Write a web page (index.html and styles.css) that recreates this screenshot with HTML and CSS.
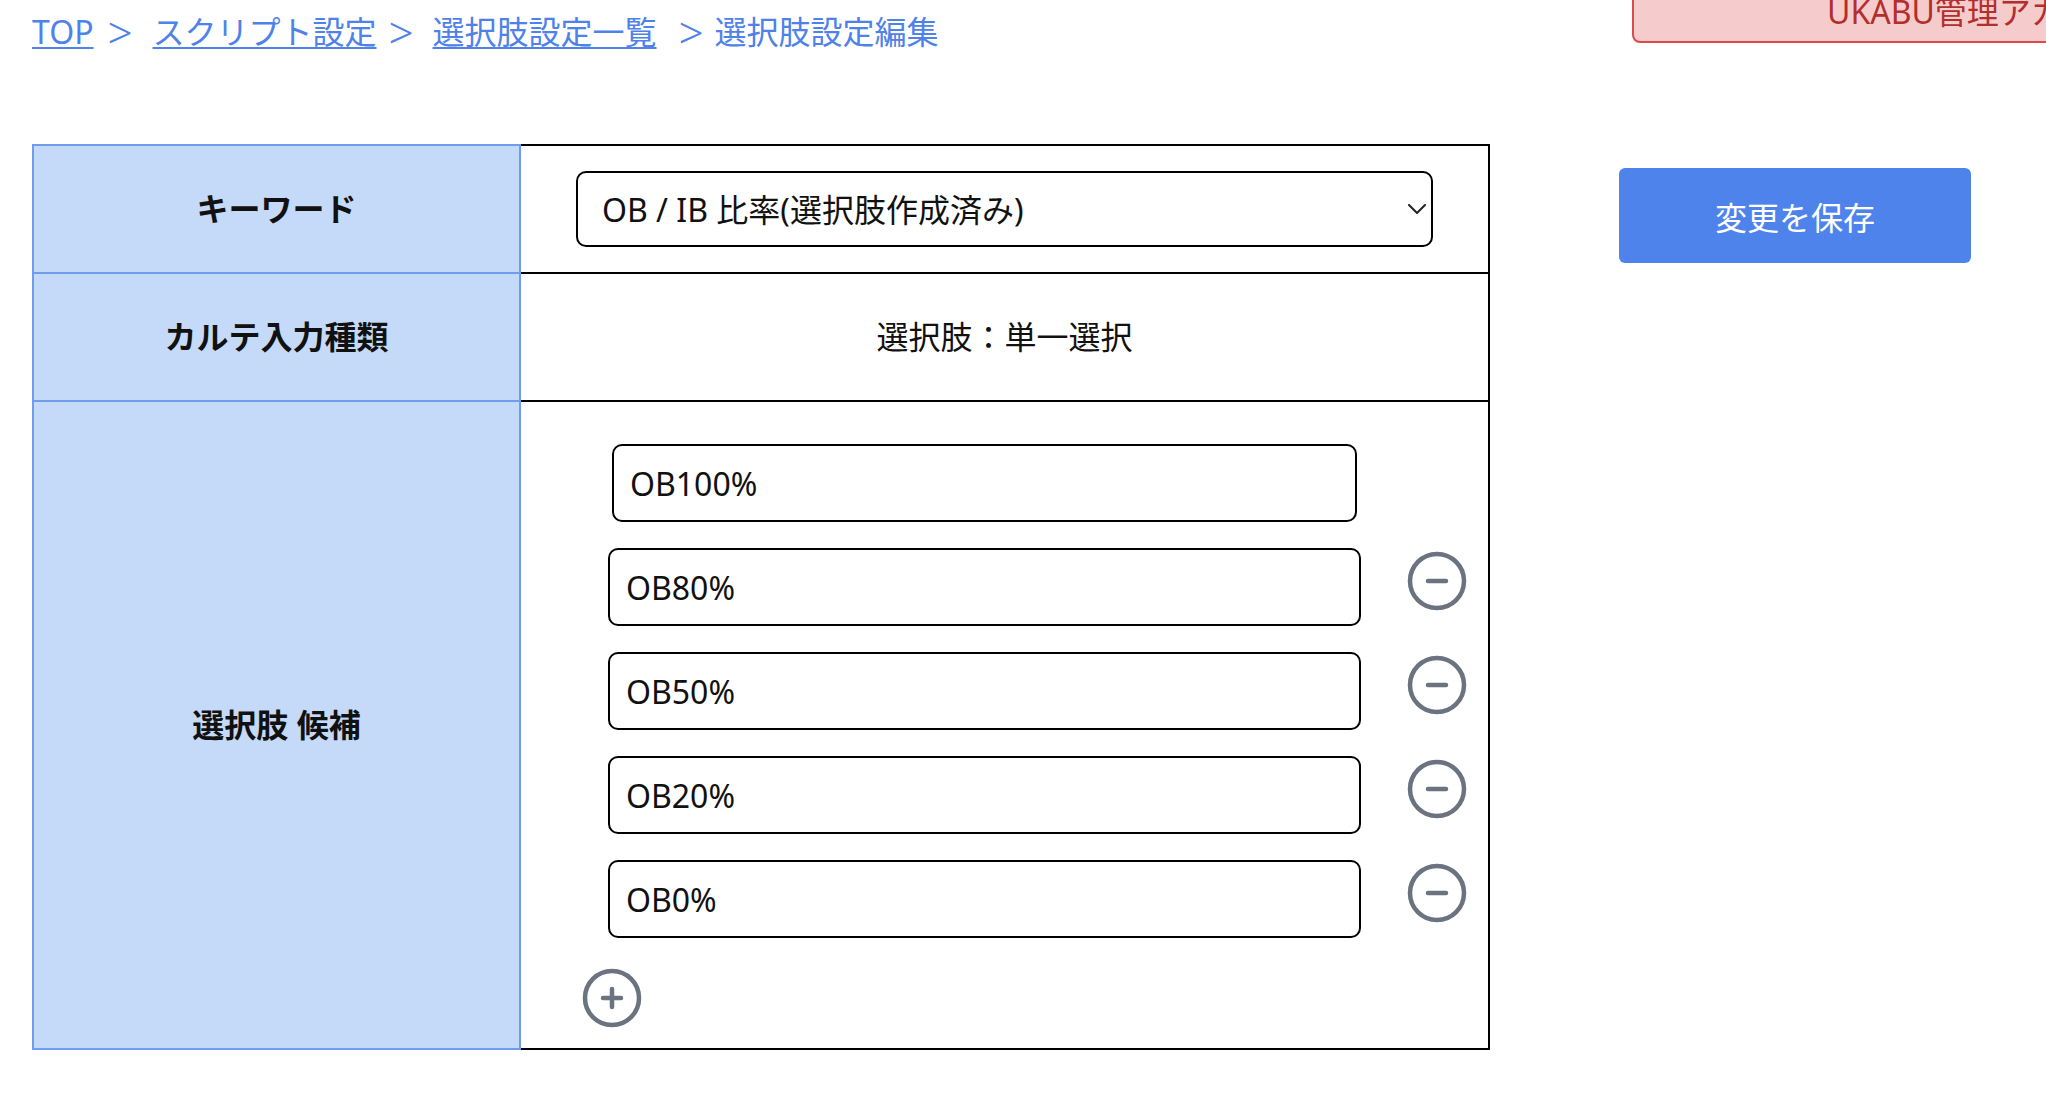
FILE: index.html
```html
<!DOCTYPE html>
<html lang="ja">
<head>
<meta charset="utf-8">
<title>選択肢設定編集</title>
<link rel="stylesheet" href="styles.css">
</head>
<body>
<header class="top">
  <nav class="crumbs">
    <a href="#" class="crumb">TOP</a><span class="sep sep-1">&gt;</span><a href="#" class="crumb">スクリプト設定</a><span class="sep sep-2">&gt;</span><a href="#" class="crumb">選択肢設定一覧</a><span class="sep sep-3">&gt;</span><span class="current">選択肢設定編集</span>
  </nav>
  <div class="account">UKABU管理アカウント</div>
</header>

<main class="editor">
  <section class="form-table">
    <div class="label">キーワード</div>
    <div class="value value-select">
      <div class="select-wrap">
        <select class="select">
          <option>OB / IB 比率(選択肢作成済み)</option>
        </select>
        <svg class="chev" width="18" height="10" viewBox="0 0 18 10" aria-hidden="true"><polyline points="1,1 9,9 17,1" fill="none" stroke="#222" stroke-width="2" stroke-linecap="round" stroke-linejoin="round"/></svg>
      </div>
    </div>

    <div class="label">カルテ入力種類</div>
    <div class="value value-text">選択肢：単一選択</div>

    <div class="label label-last">選択肢 候補</div>
    <div class="value value-last options">
      <div class="option-row first">
        <input class="option-input" type="text" value="OB100%">
        <span class="icon-spacer"></span>
      </div>
      <div class="option-row">
        <input class="option-input" type="text" value="OB80%">
        <button class="icon-btn" type="button" aria-label="削除"><svg viewBox="0 0 24 24" fill="none" stroke="currentColor" stroke-width="1.5" stroke-linecap="round" stroke-linejoin="round"><path d="M15 12H9m12 0a9 9 0 1 1-18 0 9 9 0 0 1 18 0Z"/></svg></button>
      </div>
      <div class="option-row">
        <input class="option-input" type="text" value="OB50%">
        <button class="icon-btn" type="button" aria-label="削除"><svg viewBox="0 0 24 24" fill="none" stroke="currentColor" stroke-width="1.5" stroke-linecap="round" stroke-linejoin="round"><path d="M15 12H9m12 0a9 9 0 1 1-18 0 9 9 0 0 1 18 0Z"/></svg></button>
      </div>
      <div class="option-row">
        <input class="option-input" type="text" value="OB20%">
        <button class="icon-btn" type="button" aria-label="削除"><svg viewBox="0 0 24 24" fill="none" stroke="currentColor" stroke-width="1.5" stroke-linecap="round" stroke-linejoin="round"><path d="M15 12H9m12 0a9 9 0 1 1-18 0 9 9 0 0 1 18 0Z"/></svg></button>
      </div>
      <div class="option-row">
        <input class="option-input" type="text" value="OB0%">
        <button class="icon-btn" type="button" aria-label="削除"><svg viewBox="0 0 24 24" fill="none" stroke="currentColor" stroke-width="1.5" stroke-linecap="round" stroke-linejoin="round"><path d="M15 12H9m12 0a9 9 0 1 1-18 0 9 9 0 0 1 18 0Z"/></svg></button>
      </div>
      <button class="icon-btn add" type="button" aria-label="追加"><svg viewBox="0 0 24 24" fill="none" stroke="currentColor" stroke-width="1.5" stroke-linecap="round" stroke-linejoin="round"><path d="M12 9v6m3-3H9m12 0a9 9 0 1 1-18 0 9 9 0 0 1 18 0Z"/></svg></button>
    </div>
  </section>

  <button class="save" type="button">変更を保存</button>
</main>
</body>
</html>
```

FILE: styles.css
```css
* {
  box-sizing: border-box;
}

html, body {
  margin: 0;
  padding: 0;
  overflow: hidden;
  background: #ffffff;
}

body {
  font-family: "Noto Sans", "Noto Sans CJK JP", sans-serif;
  font-size: 32px;
  color: #111111;
  width: 2046px;
  height: 1112px;
}

/* ---------- header ---------- */
.top {
  display: flex;
  align-items: flex-start;
  height: 52px;
}

.crumbs {
  padding: 9px 0 0 32px;
  line-height: 46px;
  white-space: nowrap;
  color: #4e82ea;
}

.crumb {
  color: #4e82ea;
  text-decoration: underline;
  text-decoration-thickness: 2px;
  text-underline-offset: 3px;
}

.sep {
  display: inline-block;
  width: 22px;
  text-align: center;
  font-size: 44px;
  font-weight: 300;
  line-height: 46px;
  vertical-align: top;
  color: #4e82ea;
}

.sep-1 { margin: 0 23px 0 14px; }
.sep-2 { margin: 0 22px 0 12px; }
.sep-3 { margin: 0 14px 0 22px; }

.current {
  color: #4e82ea;
}

.account {
  flex: none;
  width: 600px;
  height: 90px;
  margin: -47px -186px 0 auto;
  padding: 34px 0 0 193px;
  line-height: 46px;
  background: #f5cccb;
  border: 2px solid #dc4b4a;
  border-radius: 8px;
  color: #b22f2d;
  white-space: nowrap;
  overflow: hidden;
}

/* ---------- main ---------- */
.editor {
  display: flex;
  align-items: flex-start;
  margin-top: 92px;
  padding-left: 32px;
}

.form-table {
  display: grid;
  grid-template-columns: 489px 969px;
  grid-template-rows: 128px 128px 650px;
  flex: none;
}

.label {
  display: flex;
  align-items: center;
  justify-content: center;
  background: #c4daf8;
  border: 2px solid #6c9ef0;
  border-bottom: none;
  font-weight: 700;
  color: #111111;
  line-height: 46px;
}

.label-last {
  border-bottom: 2px solid #6c9ef0;
}

.value {
  border-top: 2px solid #000000;
  border-right: 2px solid #000000;
}

.value-last {
  border-bottom: 2px solid #000000;
}

.value-select {
  display: flex;
  align-items: center;
  padding: 0 55px;
}

.select-wrap {
  position: relative;
  flex: 1;
}

.select {
  display: block;
  width: 100%;
  height: 76px;
  padding: 0 40px 0 24px;
  border: 2px solid #000000;
  border-radius: 10px;
  background: #ffffff;
  font-family: inherit;
  font-size: 32px;
  color: #111111;
  -webkit-appearance: none;
  appearance: none;
}

.chev {
  position: absolute;
  right: 7px;
  top: 33px;
  pointer-events: none;
}

.value-text {
  display: flex;
  align-items: center;
  justify-content: center;
  color: #111111;
  line-height: 46px;
}

/* ---------- options ---------- */
.options {
  display: flex;
  flex-direction: column;
  align-items: stretch;
  gap: 26px;
  padding: 42px 15px 0 55px;
}

.option-row {
  display: flex;
  align-items: flex-start;
  gap: 40px;
  margin-left: 32px;
}

.option-input {
  flex: 1;
  min-width: 0;
  height: 78px;
  padding: 0 16px;
  border: 2px solid #000000;
  border-radius: 10px;
  background: #ffffff;
  font-family: inherit;
  font-size: 32px;
  color: #111111;
  outline: none;
}

.option-row.first .option-input {
  margin: 0 4px;
}

.icon-spacer {
  flex: none;
  width: 72px;
}

.icon-btn {
  flex: none;
  width: 72px;
  height: 72px;
  margin-top: -3px;
  padding: 0;
  border: none;
  background: none;
  color: #6b7280;
  cursor: pointer;
}

.icon-btn svg {
  display: block;
  width: 72px;
  height: 72px;
}

.icon-btn.add {
  align-self: flex-start;
  margin-top: -2px;
}

/* ---------- save ---------- */
.save {
  flex: none;
  width: 352px;
  height: 95px;
  margin: 24px 0 0 129px;
  border: none;
  border-radius: 6px;
  background: #4f83ec;
  color: #ffffff;
  font-family: inherit;
  font-size: 32px;
  cursor: pointer;
}
```
